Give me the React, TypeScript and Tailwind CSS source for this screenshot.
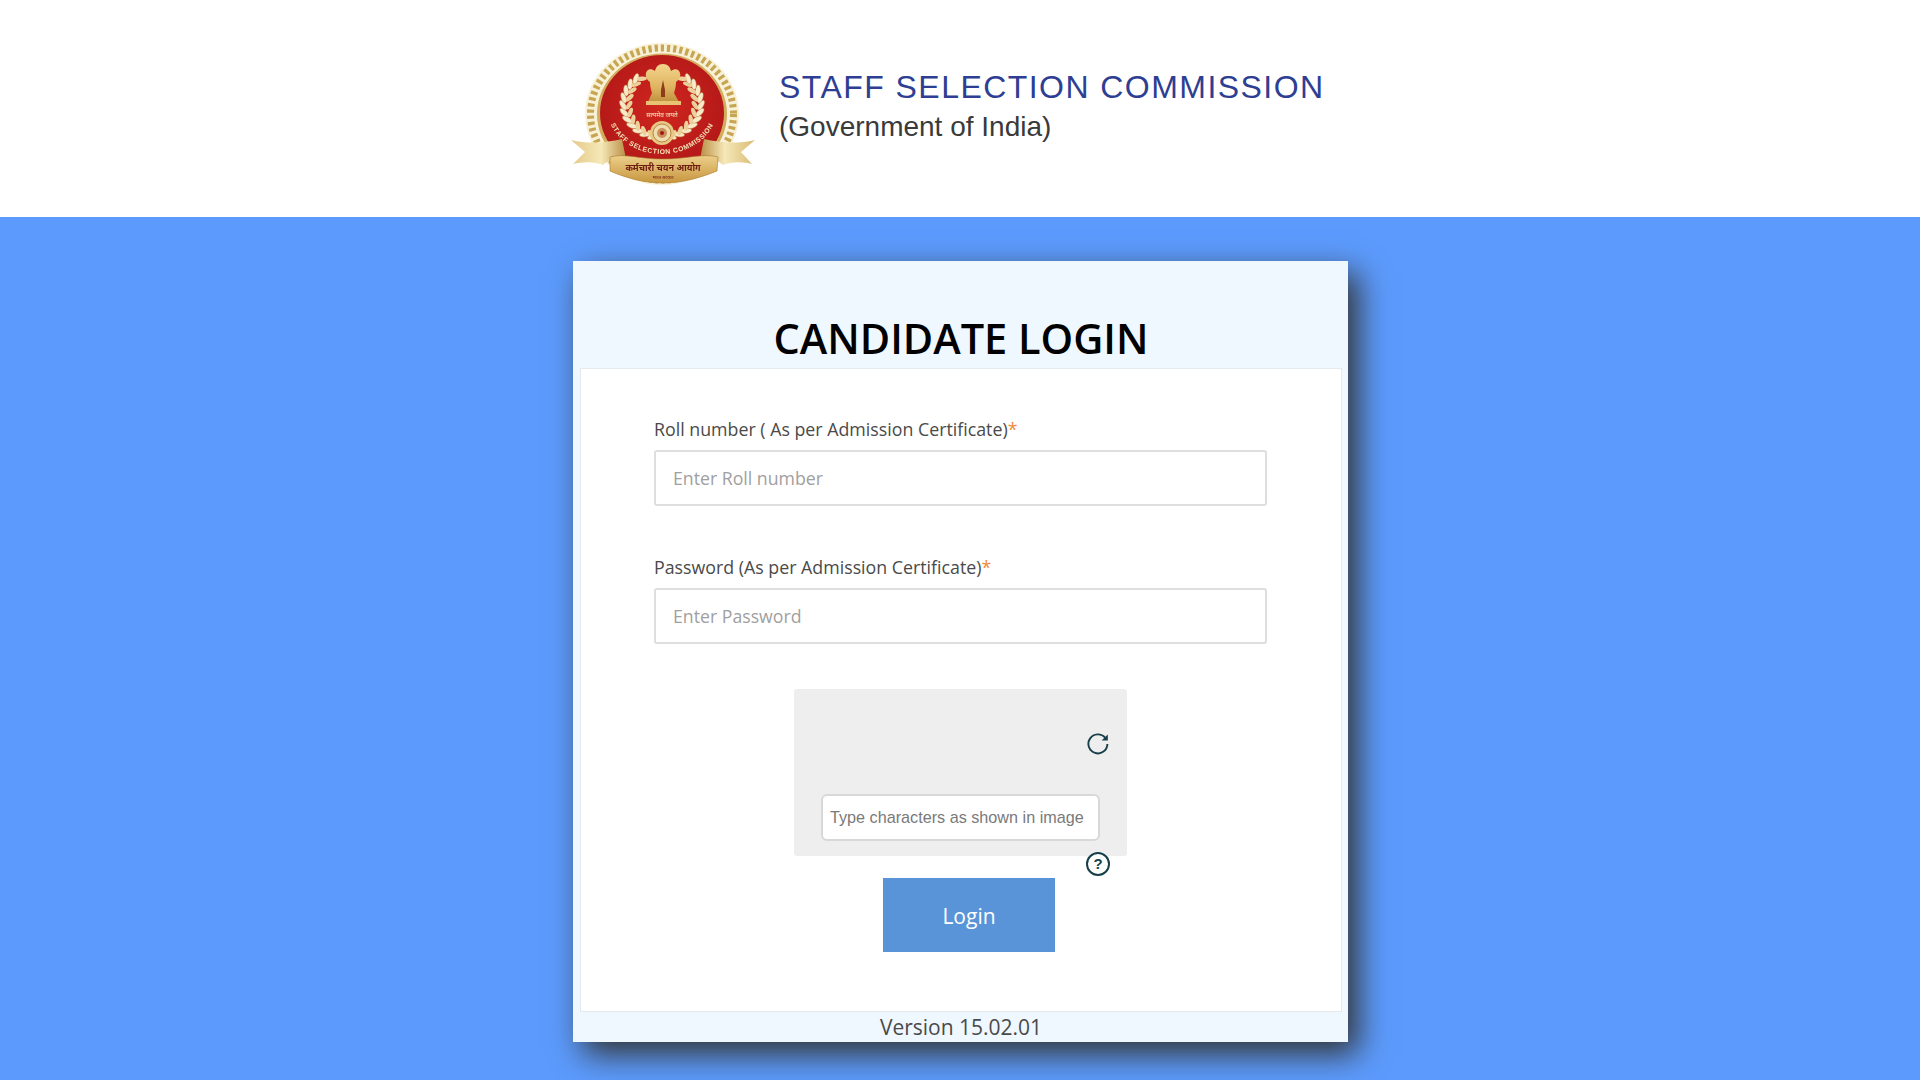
// laurel leaves along one side of the wreath, mirrored for the other side
const leafAngles = [100, 113, 126, 139, 152, 165, 178, 191, 204, 217, 230];

function SscLogo() {
  return (
    <svg width="190" height="150" viewBox="0 0 190 150" className="blur-[0.5px]">
      <defs>
        <linearGradient id="gold" x1="0" y1="0" x2="0" y2="1">
          <stop offset="0" stopColor="#f2d48c" />
          <stop offset="0.6" stopColor="#e0b562" />
          <stop offset="1" stopColor="#c0913f" />
        </linearGradient>
        <linearGradient id="ribbonL" x1="0" y1="0" x2="1" y2="0">
          <stop offset="0" stopColor="#e3c987" />
          <stop offset="0.55" stopColor="#f6e8b8" />
          <stop offset="1" stopColor="#b98f45" />
        </linearGradient>
        <linearGradient id="ribbonR" x1="1" y1="0" x2="0" y2="0">
          <stop offset="0" stopColor="#d8bb72" />
          <stop offset="0.55" stopColor="#f6e8b8" />
          <stop offset="1" stopColor="#b98f45" />
        </linearGradient>
        <linearGradient id="band" x1="0" y1="0" x2="0" y2="1">
          <stop offset="0" stopColor="#eccf8b" />
          <stop offset="1" stopColor="#c8963f" />
        </linearGradient>
        <radialGradient id="red" cx="0.5" cy="0.45" r="0.6">
          <stop offset="0" stopColor="#d0261f" />
          <stop offset="1" stopColor="#b01717" />
        </radialGradient>
        <path id="sscArc" d="M37 68 A55 46 0 0 0 147 68" fill="none" />
      </defs>

      {/* outer toothed ring */}
      <ellipse cx="92" cy="74" rx="77" ry="71" fill="#f8f1d8" />
      <ellipse cx="92" cy="74" rx="71.5" ry="66" fill="none" stroke="#c7a653" strokeWidth="7" strokeDasharray="3.2 3" />
      <ellipse cx="92" cy="74" rx="65" ry="60.5" fill="#d3ad5e" />
      <ellipse cx="92" cy="73" rx="62" ry="58" fill="url(#red)" />

      {/* wreath */}
      {leafAngles.map((a) => {
        const r = (a * Math.PI) / 180;
        const x = 36 * Math.cos(r);
        const y = 33 * Math.sin(r);
        return (
          <g key={a}>
            <ellipse cx={92 + x - 3} cy={64 + y} rx="5.5" ry="2.5" fill="#f7e9c9" stroke="#b98a3c" strokeWidth="0.4" transform={`rotate(${a + 60} ${92 + x - 3} ${64 + y})`} />
            <ellipse cx={92 + x + 3} cy={64 + y} rx="5" ry="2.2" fill="#ecd09a" transform={`rotate(${a + 125} ${92 + x + 3} ${64 + y})`} />
            <ellipse cx={92 - x + 3} cy={64 + y} rx="5.5" ry="2.5" fill="#f7e9c9" stroke="#b98a3c" strokeWidth="0.4" transform={`rotate(${-a - 60} ${92 - x + 3} ${64 + y})`} />
            <ellipse cx={92 - x - 3} cy={64 + y} rx="5" ry="2.2" fill="#ecd09a" transform={`rotate(${-a - 125} ${92 - x - 3} ${64 + y})`} />
          </g>
        );
      })}

      {/* lion capital */}
      <path
        d="M93 24 C88 24 86 27 85 31 C81 28 77 29 76 33 C75 37 77 40 80 42 C80 46 81 50 82 53 L78 62 L109 62 L104 53 C105 50 106 46 106 42 C109 40 111 37 110 33 C109 29 105 28 101 31 C100 27 98 24 93 24 Z"
        fill="url(#gold)"
      />
      <rect x="76" y="61" width="35" height="4" fill="#e8c273" />
      <path d="M93 40 L95 50 L95 57 L91 57 L91 50 Z" fill="#8d3b1b" />

      <text x="92" y="77" textAnchor="middle" fontSize="6.5" fill="#f6e6bf" fontFamily="'Noto Sans', 'DejaVu Sans', sans-serif">सत्यमेव जयते</text>

      {/* chakra */}
      <circle cx="92" cy="93" r="12" fill="#e8c885" />
      <circle cx="92" cy="93" r="9" fill="#f0dcae" stroke="#a8742c" strokeWidth="0.8" />
      <circle cx="92" cy="93" r="5" fill="#c9915a" />
      <circle cx="92" cy="93" r="2" fill="#a51414" />

      <text fontSize="6.8" fontWeight="700" fill="#f5e3b8" letterSpacing="0.6" fontFamily="'Liberation Sans', sans-serif">
        <textPath href="#sscArc" startOffset="50%" textAnchor="middle">STAFF SELECTION COMMISSION</textPath>
      </text>

      {/* ribbon tails */}
      <path d="M1 100 C18 104 36 103 52 99 L56 119 C46 118 38 120 33 125 C24 121 12 122 3 124 L15 112 Z" fill="url(#ribbonL)" />
      <path d="M185 100 C168 104 150 103 134 99 L130 119 C140 118 148 120 153 125 C162 121 174 122 182 124 L171 112 Z" fill="url(#ribbonR)" />
      {/* ribbon centre */}
      <path d="M40 117 C55 113 68 119 93 119 C118 119 132 113 148 117 L147 131 C132 137 114 143 93 143 C72 143 54 137 40 131 Z" fill="url(#band)" stroke="#a97a2c" strokeWidth="0.6" />
      <text x="93" y="131" textAnchor="middle" fontSize="9" fontWeight="700" fill="#6e1d12" fontFamily="'Noto Sans', 'DejaVu Sans', sans-serif">कर्मचारी चयन आयोग</text>
      <text x="93" y="139" textAnchor="middle" fontSize="4.5" fill="#6e1d12" fontFamily="'Noto Sans', 'DejaVu Sans', sans-serif">भारत सरकार</text>
    </svg>
  );
}

function Field({ label, placeholder, type }: { label: string; placeholder: string; type: string }) {
  return (
    <div>
      <label className="block mb-[9px] -mt-px text-[17.8px] leading-6 text-[#4a4a4a]">
        {label}
        <span className="text-[#f08a3c]">*</span>
      </label>
      <input
        type={type}
        placeholder={placeholder}
        className="block w-full h-14 px-[17px] bg-white border-2 border-[#dedede] rounded-[3px] text-[17.7px] placeholder-[#a0a0a0] outline-none"
      />
    </div>
  );
}

export default function App() {
  return (
    <div className="min-h-screen bg-[#5c9bfd] font-['Open_Sans',sans-serif]">
      <header className="h-[217px] bg-white flex justify-center">
        <div className="flex w-[780px] pt-10">
          <SscLogo />
          <div className="ml-[19px] pt-[27px]">
            <div className="font-['Liberation_Sans',sans-serif] text-[32px] leading-10 tracking-[1.45px] text-[#2e3f93] whitespace-nowrap">
              STAFF SELECTION COMMISSION
            </div>
            <div className="font-['Liberation_Sans',sans-serif] text-[28px] leading-10 text-[#3a3a3a] whitespace-nowrap">
              (Government of India)
            </div>
          </div>
        </div>
      </header>

      <main className="flex justify-center pt-11 pl-px">
        <div className="w-[775px] h-[781px] bg-[#eff7ff] flex flex-col pl-[7px] pr-[6px] shadow-[10px_12px_30px_#333]">
          <h1 className="h-[107px] shrink-0 flex items-end justify-center pb-[2px] text-[41.5px] font-semibold leading-[56px] text-black">
            CANDIDATE LOGIN
          </h1>
          <div className="flex-1 bg-white border border-[#e4e9ee] pl-[73px] pr-[74px] pt-[49px]">
            <div className="flex flex-col gap-[50px]">
              <Field label="Roll number ( As per Admission Certificate)" placeholder="Enter Roll number" type="text" />
              <Field label="Password (As per Admission Certificate)" placeholder="Enter Password" type="password" />
            </div>

            <div className="relative w-[333px] h-[167px] mx-auto mt-[45px] bg-[#eeeeee] rounded-[3px] flex flex-col items-center justify-end pb-[15px]">
              <svg width="24" height="24" viewBox="0 0 24 24" fill="none" className="absolute right-[17px] top-[42px] text-[#173f4a]">
                <path d="M19.2 6.8 A9.5 9.5 0 1 0 21.4 13" stroke="currentColor" strokeWidth="1.9" />
                <path d="M21.8 3.4 V9.6 H15.6 Z" fill="currentColor" />
              </svg>
              <input
                type="text"
                placeholder="Type characters as shown in image"
                className="w-[279px] h-[47px] px-[7px] bg-white border-2 border-[#d8d8d8] rounded-[6px] font-['Liberation_Sans',sans-serif] text-[16.2px] placeholder-[#7a7a7a] outline-none"
              />
              <div className="absolute right-[17px] -bottom-5 w-6 h-6 rounded-full border-2 border-[#173f4a] bg-white flex items-center justify-center font-['Liberation_Sans',sans-serif] font-bold text-[15px] text-[#173f4a]">
                ?
              </div>
            </div>

            <div className="flex justify-center mt-[22px] pl-[17px]">
              <button className="w-[172px] h-[74px] pt-[3px] bg-[#5a94d8] text-white text-[21px]">Login</button>
            </div>
          </div>
          <div className="h-[30px] shrink-0 flex items-center justify-center text-[21px] text-[#4a4a4a] leading-[30px]">
            Version 15.02.01
          </div>
        </div>
      </main>
    </div>
  );
}
